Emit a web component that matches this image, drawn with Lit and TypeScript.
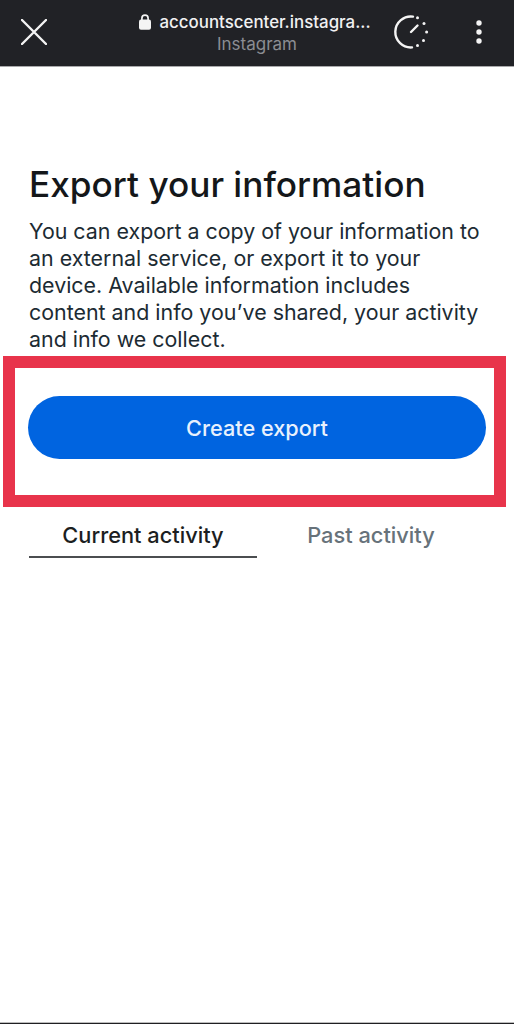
import { LitElement, html, css } from "lit";
import { customElement } from "lit/decorators.js";

@customElement("app-root")
export class AppRoot extends LitElement {
  static styles = css`
    :host { display: flex; flex-direction: column; width: 514px; height: 1024px; background: #fff; font-family: Inter, "Noto Sans", sans-serif; overflow: hidden; }
    .bar { height: 67px; box-sizing: border-box; flex: none; background: #212226; border-bottom: 1px solid #a9a9ab; padding-bottom: 2px; display: flex; align-items: center; }
    .close { width: 26px; height: 26px; margin-left: 21px; flex: none; }
    .addr { flex: none; width: 230px; margin-left: 95px; margin-top: 2px; display: flex; flex-direction: column; align-items: center; }
    .url { display: flex; align-items: center; gap: 8px; color: #f1f1f2; font-size: 16.9px; font-weight: 500; line-height: 22px; white-space: nowrap; height: 22px; margin-left: -4px; }
    .sub { color: #8b8d92; font-size: 17px; line-height: 22px; }
    .timer { width: 36px; height: 36px; margin-left: 21px; flex: none; }
    .dots { width: 8px; height: 26px; margin-left: 46px; flex: none; }
    main { flex: 1; display: flex; flex-direction: column; }
    h1 { margin: 97px 0 0 29px; font-size: 35.2px; line-height: 40px; font-weight: 500; color: #14171a; white-space: nowrap; }
    p { margin: 14px 0 0 29px; width: 470px; font-size: 21.4px; line-height: 27px; font-weight: 400; color: #1c2b33; }
    .p-line { display: block; white-space: nowrap; }
    .mark { margin: 3px 0 0 3px; width: 503px; height: 151px; box-sizing: border-box; border: 12px solid #e8344b; padding: 28px 8px 0 13px; flex: none; }
    .btn { width: 458px; height: 63px; border-radius: 32px; background: #0064e0; color: #e8f1fd; display: flex; align-items: center; justify-content: center; font-size: 21.7px; font-weight: 500; }
    .tabs { display: flex; margin: 0 0 0 29px; width: 456px; flex: none; }
    .tab { width: 228px; height: 51px; box-sizing: border-box; border-bottom: 2px solid transparent; display: flex; align-items: center; justify-content: center; padding-top: 6px; font-size: 21.8px; font-weight: 500; color: #67727a; }
    .tab.on { color: #1c1e21; border-bottom-color: #4b4d50; }
    .foot { flex: none; height: 2px; background: #1f1f22; border-top: 1px solid #bdbdbd; box-sizing: border-box; }
  `;

  render() {
    return html`
      <header class="bar">
        <svg class="close" viewBox="0 0 26 26" fill="none" stroke="#f4f4f4" stroke-width="2.4" stroke-linecap="round"><path d="M1 1 L25 25 M25 1 L1 25"/></svg>
        <div class="addr">
          <div class="url">
            <svg width="12" height="16" viewBox="0 0 12 16"><path d="M2.9 6V4.3a3.1 3.1 0 0 1 6.2 0V6" fill="none" stroke="#f4f4f4" stroke-width="1.7"/><rect y="5.6" width="12" height="10.2" rx="2" fill="#f4f4f4"/></svg>
            <span>accountscenter.instagra...</span>
          </div>
          <div class="sub">Instagram</div>
        </div>
        <svg class="timer" viewBox="0 0 36 36" fill="none" stroke="#f4f4f4" stroke-linecap="round">
          <path d="M20 2.6 A15.5 15.5 0 1 0 19 33.4" stroke-width="2.4"/>
          <path d="M18 18 L24.5 11.5" stroke-width="2.4"/>
          <g fill="#f4f4f4" stroke="none">
            <circle cx="24.5" cy="3.8" r="1.5"/><circle cx="31" cy="9.5" r="1.5"/><circle cx="33.6" cy="18" r="1.5"/><circle cx="30.5" cy="26.6" r="1.5"/><circle cx="24.5" cy="31.5" r="1.5"/>
          </g>
        </svg>
        <svg class="dots" viewBox="0 0 8 26" fill="#f4f4f4"><circle cx="4" cy="4" r="2.7"/><circle cx="4" cy="13" r="2.7"/><circle cx="4" cy="22" r="2.7"/></svg>
      </header>
      <main>
        <h1>Export your information</h1>
        <p>
          <span class="p-line">You can export a copy of your information to</span>
          <span class="p-line">an external service, or export it to your</span>
          <span class="p-line">device. Available information includes</span>
          <span class="p-line">content and info you’ve shared, your activity</span>
          <span class="p-line">and info we collect.</span>
        </p>
        <div class="mark"><div class="btn">Create export</div></div>
        <div class="tabs">
          <div class="tab on">Current activity</div>
          <div class="tab">Past activity</div>
        </div>
      </main>
      <div class="foot"></div>
    `;
  }
}
